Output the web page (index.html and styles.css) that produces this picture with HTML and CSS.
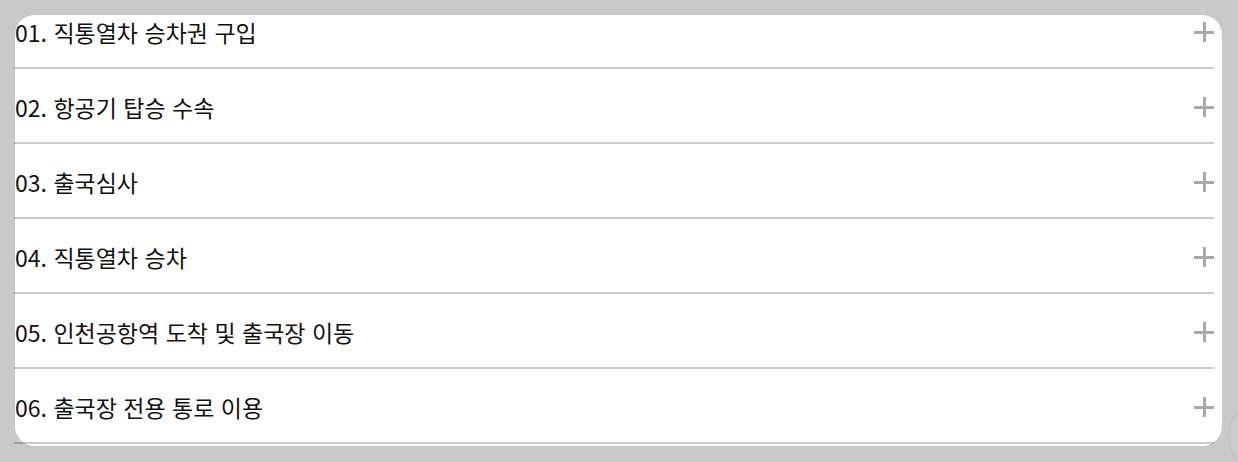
FILE: index.html
```html
<!DOCTYPE html>
<html lang="ko">
<head>
<meta charset="utf-8">
<title>직통열차 이용 안내</title>
<link rel="stylesheet" href="styles.css">
</head>
<body>
<div class="page">
  <div class="card">
    <ul class="steps">
      <li class="step"><span class="step-title">01. 직통열차 승차권 구입</span><span class="plus"></span></li>
      <li class="step"><span class="step-title">02. 항공기 탑승 수속</span><span class="plus"></span></li>
      <li class="step"><span class="step-title">03. 출국심사</span><span class="plus"></span></li>
      <li class="step"><span class="step-title">04. 직통열차 승차</span><span class="plus"></span></li>
      <li class="step"><span class="step-title">05. 인천공항역 도착 및 출국장 이동</span><span class="plus"></span></li>
      <li class="step"><span class="step-title">06. 출국장 전용 통로 이용</span><span class="plus"></span></li>
    </ul>
  </div>
  <div class="ghost"></div>
</div>
</body>
</html>
```
FILE: styles.css
```css
html, body {
  margin: 0;
  padding: 0;
  background: #c9c9c9;
  overflow: hidden;
}
.page {
  position: relative;
  width: 1238px;
  height: 462px;
  padding: 15px 0 0 15px;
  box-sizing: border-box;
  overflow: hidden;
  font-family: "Noto Sans CJK KR", "Noto Sans", sans-serif;
}
.card {
  display: flow-root;
  width: 1207px;
  height: 431px;
  background: #fff;
  border-radius: 20px;
}
.steps {
  list-style: none;
  margin: -21px 0 0 -1px;
  padding: 0;
  width: 1200px;
}
.step {
  display: flex;
  align-items: center;
  justify-content: space-between;
  height: 75px;
  box-sizing: border-box;
  padding-top: 3px;
  border-bottom: 2px solid rgba(0, 0, 0, 0.2);
}
.step-title {
  font-size: 23px;
  color: #111;
  line-height: 30px;
  padding-left: 1px;
}
.plus {
  position: relative;
  width: 20px;
  height: 20px;
  margin-bottom: 1px;
}
.plus::before,
.plus::after {
  content: "";
  position: absolute;
  background: #a9a9a9;
}
.plus::before {
  left: 0;
  right: 0;
  top: 9px;
  height: 3px;
}
.plus::after {
  top: 0;
  bottom: 0;
  left: 9px;
  width: 3px;
}
.ghost {
  position: absolute;
  left: 1228px;
  top: 396px;
  width: 80px;
  height: 80px;
  border-radius: 50%;
  background: #cdcdcd;
  box-shadow: inset 2px 0 3px rgba(0,0,0,0.06);
}
```
